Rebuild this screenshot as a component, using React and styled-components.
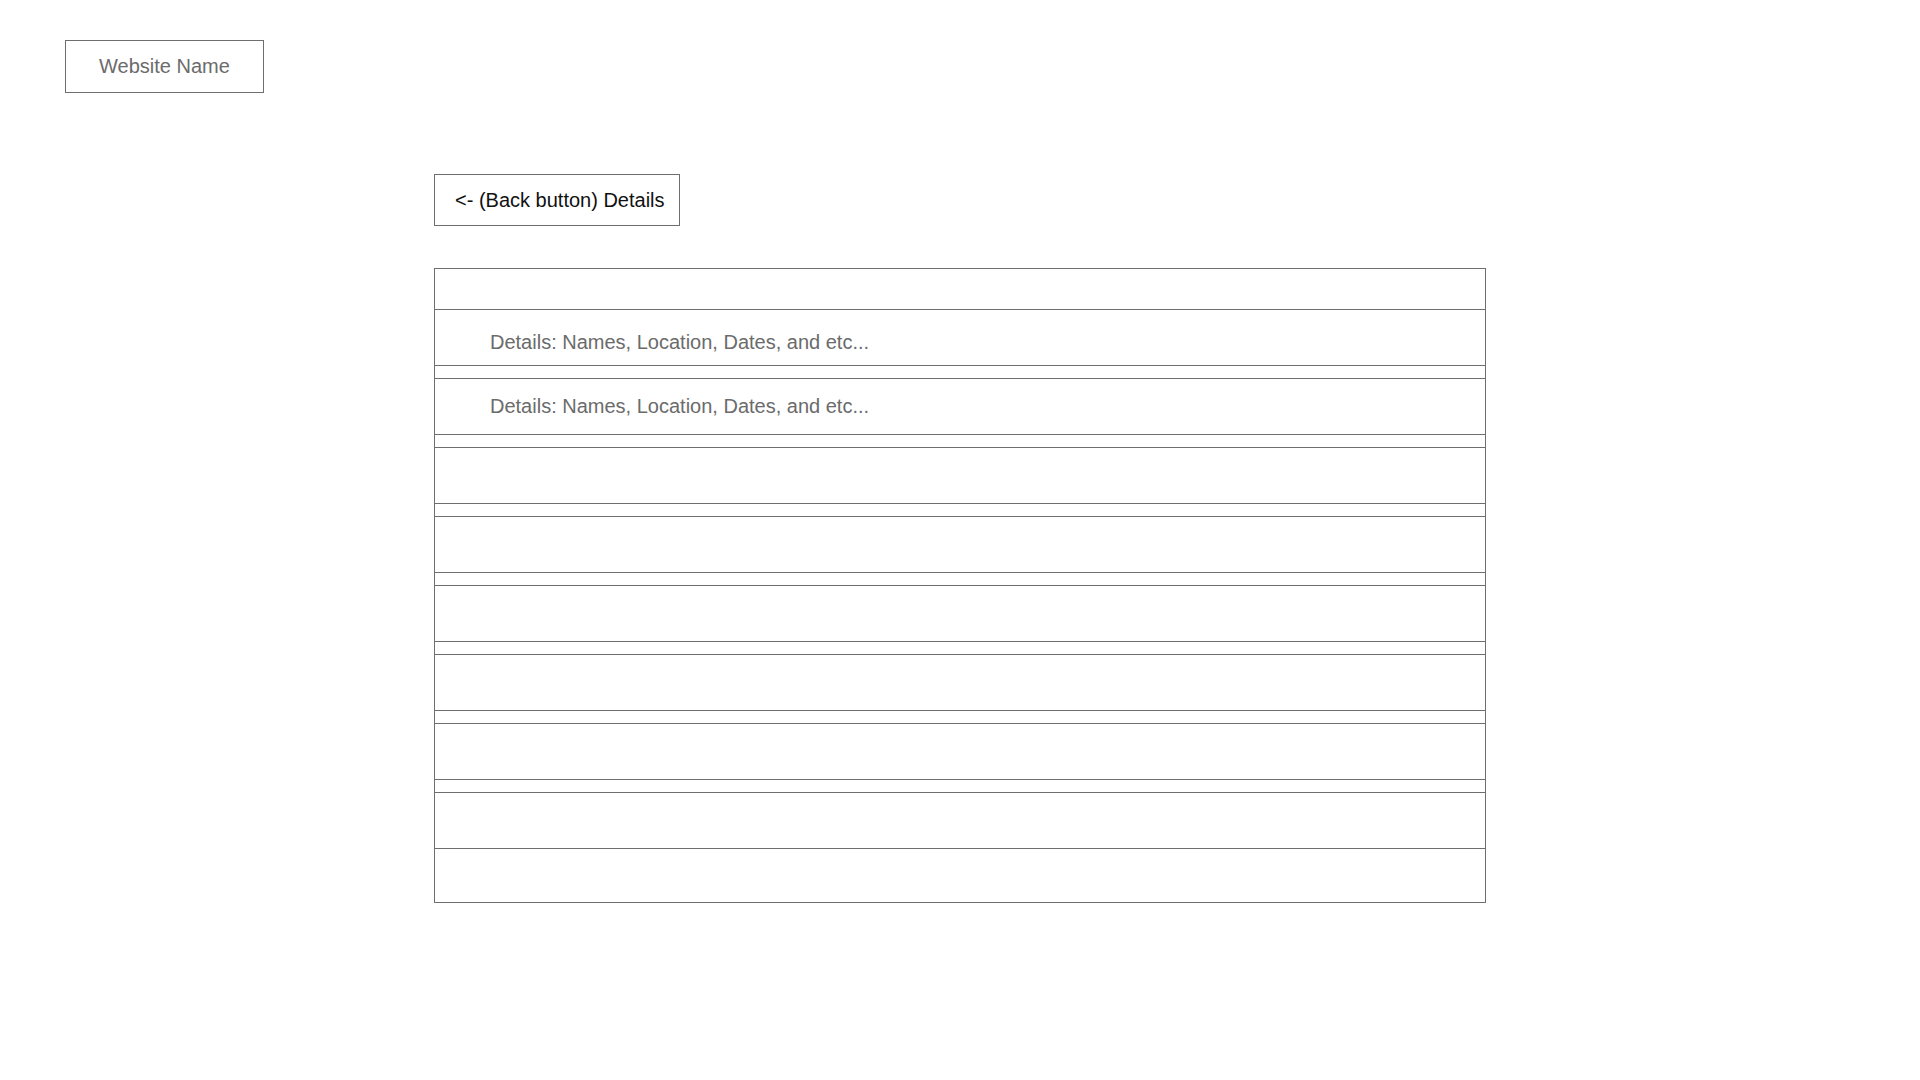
import styled, { createGlobalStyle } from 'styled-components';

const GlobalStyle = createGlobalStyle`
  html, body {
    margin: 0;
    padding: 0;
    background: #ffffff;
  }

  body {
    font-family: "Liberation Sans", Arial, sans-serif;
  }
`;

const Page = styled.div`
  min-height: 1080px;
  padding-top: 40px;
  box-sizing: border-box;
`;

const Header = styled.header`
  padding-left: 65px;
`;

const SiteName = styled.div`
  width: 199px;
  height: 53px;
  box-sizing: border-box;
  border: 1px solid #6e6e6e;
  display: flex;
  align-items: center;
  justify-content: center;
  font-size: 20px;
  color: #6b6b6b;
`;

const Main = styled.main`
  width: 1052px;
  margin: 81px auto 0;
`;

const BackButton = styled.button`
  width: 246px;
  height: 52px;
  box-sizing: border-box;
  border: 1px solid #6e6e6e;
  background: #ffffff;
  display: flex;
  align-items: center;
  padding: 0 0 0 20px;
  font-family: inherit;
  font-size: 20px;
  color: #111111;
  cursor: pointer;
`;

const Table = styled.div`
  margin-top: 42px;
  border: 1px solid #6e6e6e;
  display: flex;
  flex-direction: column;
`;

const Cell = styled.div`
  height: ${(p) => p.$h}px;
  box-sizing: content-box;
  border-bottom: ${(p) => (p.$last ? 'none' : '1px solid #6e6e6e')};
  display: flex;
  align-items: center;
  padding-left: 55px;
  font-size: 20px;
  color: #6b6b6b;
`;

// first row's text sits a little lower than centre in the mockup
const CellText = styled.span`
  position: relative;
  top: ${(p) => p.$shift || 0}px;
`;

const rows = [
  { text: 'Details: Names, Location, Dates, and etc...', shift: 5 },
  { text: 'Details: Names, Location, Dates, and etc...', shift: 0 },
  { text: '' }, { text: '' }, { text: '' }, { text: '' }, { text: '' }, { text: '' },
];

export default function App() {
  return (
    <>
      <GlobalStyle />
      <Page>
        <Header>
          <SiteName>Website Name</SiteName>
        </Header>
        <Main>
          <BackButton type="button">{'<- (Back button) Details'}</BackButton>
          <Table>
            <Cell $h={40} />
            {rows.map((row, i) => (
              <div key={i}>
                <Cell $h={55}>
                  {row.text && <CellText $shift={row.shift}>{row.text}</CellText>}
                </Cell>
                {i < rows.length - 1 && <Cell $h={12} />}
              </div>
            ))}
            <Cell $h={53} $last />
          </Table>
        </Main>
      </Page>
    </>
  );
}
